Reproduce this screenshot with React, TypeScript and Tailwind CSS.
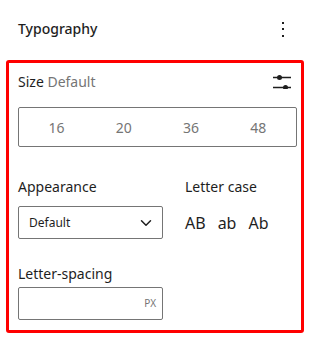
import { ChevronDown } from "lucide-react"

const font = { fontFamily: '"Noto Sans", "Open Sans", sans-serif' }

function Kebab() {
  return (
    <svg width="4" height="16" viewBox="0 0 4 16" className="text-[#1e1e1e]" fill="currentColor">
      <rect x="1" y="1" width="2" height="2" />
      <rect x="1" y="7" width="2" height="2" />
      <rect x="1" y="14" width="2" height="2" />
    </svg>
  )
}

function Sliders() {
  return (
    <svg width="20" height="14" viewBox="0 0 20 14" className="text-[#1e1e1e]">
      <path d="M1 2.5h18M1 12.5h18" stroke="currentColor" strokeWidth="1.5" />
      <circle cx="7.5" cy="2.5" r="2.5" fill="currentColor" />
      <circle cx="13.5" cy="12.5" r="2.5" fill="currentColor" />
    </svg>
  )
}

export default function App() {
  const sizes = ["16", "20", "36", "48"]
  return (
    <div className="w-[310px] h-[338px] bg-white text-[#1e1e1e] overflow-hidden" style={font}>
      <div className="flex items-center justify-between pl-[18px] pr-[25px] h-[58px]">
        <h2 className="text-[14px] font-medium leading-none">Typography</h2>
        <Kebab />
      </div>
      <div className="ml-[6px] mr-[6px] mt-[2px] h-[273px] border-[3px] border-[#ff0000] rounded-[3px] pl-[9px] pr-[4px] pt-[10px]">
        <div className="flex items-center justify-between h-[18px] pr-[5px]">
          <div className="text-[14px] leading-none">
            Size <span className="text-[#757575]">Default</span>
          </div>
          <Sliders />
        </div>
        <div className="mt-[16px] h-[40px] px-[4px] grid grid-cols-4 items-center border border-[#757575] rounded-[2px] text-[14px] text-[#757575]">
          {sizes.map((s) => (
            <span key={s} className="text-center">{s}</span>
          ))}
        </div>
        <div className="mt-[30px] flex">
          <div className="w-[145px]">
            <div className="text-[14px] leading-[20px]">Appearance</div>
            <div className="mt-[9px] h-[33px] flex items-center justify-between border border-[#757575] rounded-[2px] pl-[10px] pr-[7px]">
              <span className="text-[12px]">Default</span>
              <ChevronDown size={18} strokeWidth={2} />
            </div>
          </div>
          <div className="ml-[22px]">
            <div className="text-[14px] leading-[20px]">Letter case</div>
            <div className="mt-[9px] h-[33px] flex items-center gap-[12px] text-[16px]">
              <span>AB</span>
              <span>ab</span>
              <span>Ab</span>
            </div>
          </div>
        </div>
        <div className="mt-[25px] w-[145px]">
          <div className="text-[14px] leading-[20px]">Letter-spacing</div>
          <div className="mt-[3px] h-[33px] flex items-center justify-end border border-[#757575] rounded-[2px] pr-[6px]">
            <span className="text-[10px] text-[#757575]">PX</span>
          </div>
        </div>
      </div>
    </div>
  )
}
